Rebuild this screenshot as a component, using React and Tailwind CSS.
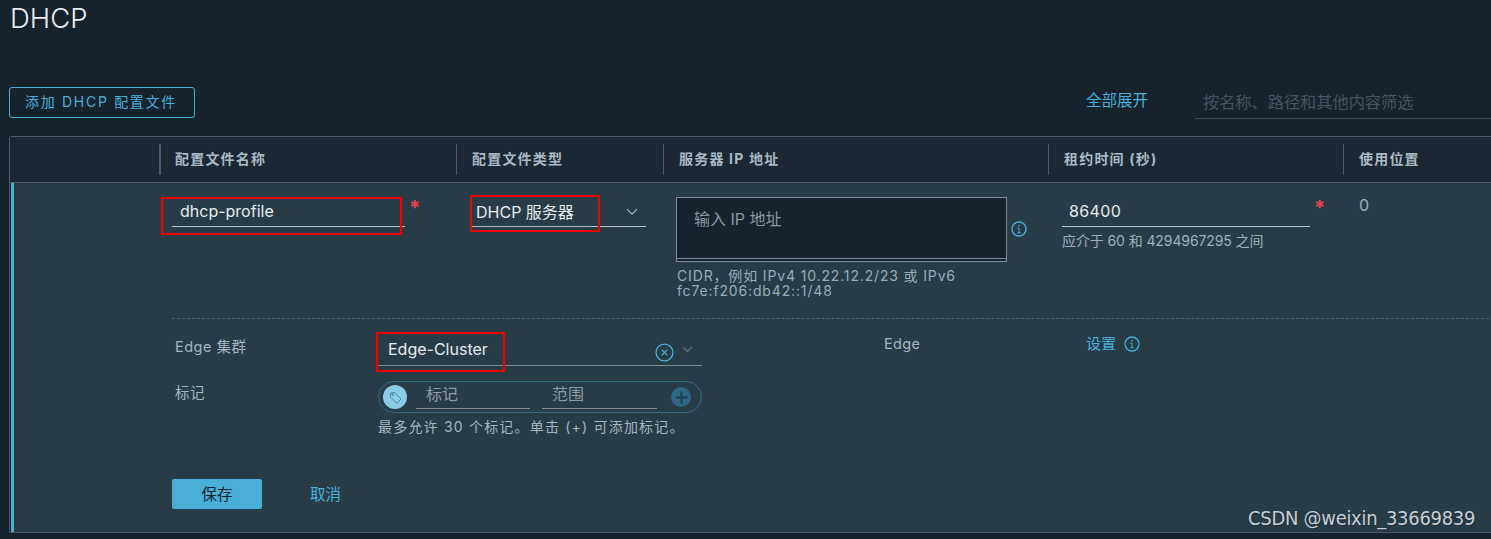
import React from "react";

const F = '"Inter","Noto Sans CJK SC",sans-serif';

function Info({ className }) {
  return (
    <svg viewBox="0 0 16 16" className={className} fill="none" stroke="#49afd9">
      <circle cx="8" cy="8" r="7" strokeWidth="1.4" />
      <circle cx="8" cy="4.6" r="0.9" fill="#49afd9" stroke="none" />
      <path d="M6.5 7.2H8.1V11.8M6.3 11.8H9.8" strokeWidth="1" />
    </svg>
  );
}

function Chevron({ color, className }) {
  return (
    <svg viewBox="0 0 12 8" className={className} fill="none" stroke={color} strokeWidth="1.2">
      <path d="M1 1.2L6 6.2L11 1.2" />
    </svg>
  );
}

function Header({ w, children, thick }) {
  return (
    <div className={`${w} h-[31px] pb-[2px] flex items-center border-[#4a5a66] text-[14px] tracking-[1.2px] font-bold text-[#a8bac6] ${thick ? "border-l-2 pl-[14px]" : "border-l pl-[15px]"}`}>
      {children}
    </div>
  );
}

function Red({ className }) {
  return <div className={`absolute border-2 border-[#f00000] ${className}`} />;
}

function Star({ className }) {
  return <span className={`absolute text-[#e8434a] text-[20px] leading-none font-bold ${className}`}>*</span>;
}

export default function App() {
  return (
    <div className="relative w-[1491px] h-[539px] overflow-hidden bg-[#17232c] text-[#c9d5dc]" style={{ fontFamily: F }}>
      <h1 className="h-[87px] pl-[10px] text-[27.5px] leading-[36px] font-light text-[#eaedf0]">DHCP</h1>

      <div className="flex items-start h-[49px] pl-[9px]">
        <button className="w-[186px] h-[31px] pb-[2px] pr-[2px] rounded-[3px] border border-[#49afd9] text-[14px] tracking-[1.7px] text-[#49afd9] flex items-center justify-center">
          添加 DHCP 配置文件
        </button>
        <a className="ml-[891px] mt-[4px] w-[62px] whitespace-nowrap text-[15.5px] leading-[20px] text-[#49afd9]">全部展开</a>
        <div className="ml-[47px] w-[296px] h-[32px] border-b border-[#3c4a55] pl-[8px] pt-[5px] text-[16.2px] leading-[20px] text-[#45535e] whitespace-nowrap">
          按名称、路径和其他内容筛选
        </div>
      </div>

      <div className="ml-[9px] w-[1490px] h-[397px] border-t border-l border-b border-[#4a5a66] rounded-tl-[3px]">
        <div className="h-[46px] flex items-center bg-[#1b2833] border-b border-[#4f606c]">
          <div className="w-[149px]" />
          <Header w="w-[297px]" thick>配置文件名称</Header>
          <Header w="w-[207px]">配置文件类型</Header>
          <Header w="w-[385px]">服务器 IP 地址</Header>
          <Header w="w-[295px]">租约时间 (秒)</Header>
          <Header w="w-[148px]">使用位置</Header>
        </div>

        <div className="relative h-[349px] ml-px bg-[#283c48] border-l-[3px] border-[#49afd9]">
          <div className="flex h-[135px] pt-[14px]">
            <div className="w-[158px] shrink-0" />
            <div className="relative w-[298px] shrink-0">
              <div className="w-[233px] h-[30px] border-b border-[#b3bfc7] pl-[8px] text-[16px] leading-[29px] text-[#e6ebee]">dhcp-profile</div>
              <Star className="left-[237px] top-[1px]" />
            </div>
            <div className="w-[206px] shrink-0">
              <div className="w-[176px] h-[30px] border-b border-[#b3bfc7] pl-[6px] pr-[8px] flex items-center justify-between text-[16px] text-[#e6ebee]">
                <span>DHCP 服务器</span>
                <Chevron color="#a8b6bf" className="w-[12px] h-[8px]" />
              </div>
            </div>
            <div className="w-[386px] shrink-0">
              <div className="flex items-center">
                <div className="w-[331px] h-[65px] bg-[#17232c] border border-[#7d8c96] shadow-[inset_0_-2px_0_0_#17232c,inset_0_-3px_0_0_#7d8c96] pl-[17px] pt-[11px] text-[16px] leading-[20px] text-[#8b979f]">
                  输入 IP 地址
                </div>
                <Info className="w-[16px] h-[16px] ml-[4px] mt-[-2px]" />
              </div>
              <div className="mt-[6px] ml-px text-[14px] tracking-[0.85px] leading-[15px] text-[#9aacb8] whitespace-nowrap">
                CIDR，例如 IPv4 10.22.12.2/23 或 IPv6
                <br />
                fc7e:f206:db42::1/48
              </div>
            </div>
            <div className="relative w-[297px] shrink-0">
              <div className="w-[248px] h-[30px] border-b border-[#b3bfc7] pl-[7px] text-[16px] tracking-[0.4px] leading-[29px] text-[#e6ebee]">86400</div>
              <Star className="left-[252px] top-[1px]" />
              <div className="mt-[5px] text-[14px] tracking-[-0.1px] leading-[17px] text-[#9fb0bc] whitespace-nowrap">应介于 60 和 4294967295 之间</div>
            </div>
            <div className="text-[16px] leading-[17px] text-[#9fb0bc]">0</div>
          </div>

          <div className="ml-[158px] border-t border-dashed border-[#4f6472]" />

          <div className="flex h-[160px]">
            <div className="w-[364px] shrink-0 pl-[161px] pt-[18px] text-[14.5px] tracking-[0.5px] leading-[20px] text-[#a5b5c0] flex flex-col gap-[26px]">
              <div>Edge 集群</div>
              <div>标记</div>
            </div>
            <div className="w-[506px] shrink-0">
              <div className="w-[324px] h-[47px] border-b border-[#7d8c96] flex items-end pb-[6px] pl-[10px] pr-[9px] text-[16px] text-[#e6ebee]">
                <span className="leading-[20px] flex-1">Edge-Cluster</span>
                <svg viewBox="0 0 18 18" className="w-[19px] h-[19px] mr-[8px] mb-[-3px]" fill="none" stroke="#49afd9" strokeWidth="1.2">
                  <circle cx="9" cy="9" r="8" />
                  <path d="M6.3 6.3L11.7 11.7M11.7 6.3L6.3 11.7" />
                </svg>
                <Chevron color="#66767f" className="w-[11px] h-[7px] mb-[6px]" />
              </div>
              <div className="mt-[15px] w-[324px] h-[32px] rounded-full border border-[#2f6a88] flex items-center pl-[4px] pr-[9px]">
                <div className="w-[24px] h-[24px] rounded-full bg-[#88cde3] flex items-center justify-center">
                  <svg viewBox="0 0 16 16" className="w-[15px] h-[15px]" fill="none" stroke="#4b7f98" strokeWidth="1">
                    <path d="M2.5 3.5L6.5 2.5L14 9.5L9.5 14L2.5 7.5Z" />
                    <circle cx="5" cy="5" r="0.8" />
                  </svg>
                </div>
                <div className="ml-[9px] w-[114px] h-[24px] border-b border-[#7d8c96] pl-[10px] text-[16px] leading-[18px] text-[#8f9ba3]">标记</div>
                <div className="ml-[12px] w-[115px] h-[24px] border-b border-[#7d8c96] pl-[10px] text-[16px] leading-[18px] text-[#8f9ba3]">范围</div>
                <div className="ml-auto mr-[1px] w-[20px] h-[20px] rounded-full bg-[#2e6782] flex items-center justify-center">
                  <svg viewBox="0 0 12 12" className="w-[13px] h-[13px]" stroke="#1e3e50" strokeWidth="2">
                    <path d="M6 0.5V11.5M0.5 6H11.5" />
                  </svg>
                </div>
              </div>
              <div className="mt-[5px] text-[14px] tracking-[1.2px] leading-[18px] text-[#a5b5c0] whitespace-nowrap">最多允许 30 个标记。单击 (+) 可添加标记。</div>
            </div>
            <div className="w-[202px] shrink-0 pt-[15px] text-[14.5px] tracking-[0.3px] leading-[20px] text-[#a5b5c0]">Edge</div>
            <div className="pt-[15px] flex items-center h-[35px] gap-[8px] text-[15px] leading-[20px] text-[#49afd9]">
              <span>设置</span>
              <Info className="w-[16px] h-[16px]" />
            </div>
          </div>

          <div className="flex items-center pl-[158px] h-[30px]">
            <button className="w-[90px] h-[30px] pt-[1px] rounded-[2px] bg-[#49afd9] text-[15.5px] text-[#10232f]">保存</button>
            <a className="ml-[48px] pt-[1px] text-[15.5px] text-[#49afd9]">取消</a>
          </div>
        </div>
      </div>

      <Red className="left-[161px] top-[197px] w-[241px] h-[38px]" />
      <Red className="left-[470px] top-[195px] w-[130px] h-[37px]" />
      <Red className="left-[376px] top-[332px] w-[129px] h-[40px]" />

      <div
        className="absolute left-[1248px] top-[506px] text-[20px] tracking-[-0.3px] leading-[24px] text-[#c4ced4] [font-stretch:condensed] [text-shadow:1px_1px_1px_#1b2a33] whitespace-nowrap"
        style={{ fontFamily: '"DejaVu Sans",sans-serif' }}
      >
        CSDN @weixin_33669839
      </div>
    </div>
  );
}
